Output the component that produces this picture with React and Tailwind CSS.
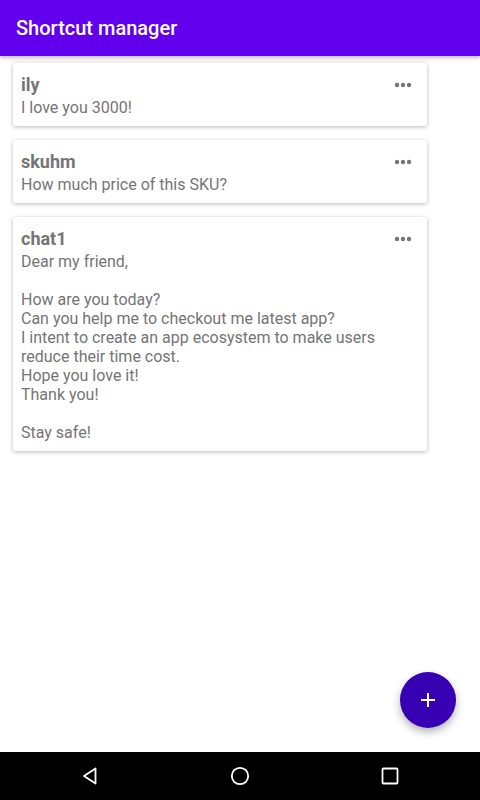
import React from "react";

function Dots() {
  return (
    <svg width="18" height="6" viewBox="0 0 18 6" className="block">
      <circle cx="3" cy="3" r="2.2" fill="#757575" />
      <circle cx="9" cy="3" r="2.2" fill="#757575" />
      <circle cx="15" cy="3" r="2.2" fill="#757575" />
    </svg>
  );
}

function Card({ title, lines }) {
  return (
    <div className="ml-[13px] w-[414px] bg-white rounded-[3px] shadow-[0_1px_4px_rgba(0,0,0,0.28)] pl-2 pr-4 pt-2 pb-[9px] relative">
      <div className="absolute right-[15px] top-[19px]">
        <Dots />
      </div>
      <div className="text-[18px] leading-[27px] font-bold text-[#757575]">{title}</div>
      <div className="text-[16px] leading-[19px] text-[#757575]">
        {lines.map((l, i) => (
          <div key={i} className="h-[19px] whitespace-pre">{l}</div>
        ))}
      </div>
    </div>
  );
}

export default function App() {
  return (
    <div className="w-[480px] h-[800px] bg-white flex flex-col relative overflow-hidden" style={{ fontFamily: "Roboto, 'Noto Sans', sans-serif" }}>
      <div className="h-[56px] bg-[#6200EE] flex items-center px-4 shadow-[0_2px_4px_rgba(0,0,0,0.25)] z-10">
        <span className="text-white text-[20px] font-medium">Shortcut manager</span>
      </div>
      <div className="flex-1 flex flex-col gap-[14px] pt-[7px]">
        <Card title="ily" lines={["I love you 3000!"]} />
        <Card title="skuhm" lines={["How much price of this SKU?"]} />
        <Card
          title="chat1"
          lines={[
            "Dear my friend,",
            "",
            "How are you today?",
            "Can you help me to checkout me latest app?",
            "I intent to create an app ecosystem to make users",
            "reduce their time cost.",
            "Hope you love it!",
            "Thank you!",
            "",
            "Stay safe!",
          ]}
        />
      </div>
      <div className="absolute left-[400px] top-[672px] w-[56px] h-[56px] rounded-full bg-[#3700B3] flex items-center justify-center shadow-[0_4px_8px_rgba(0,0,0,0.3)]">
        <svg width="16" height="16" viewBox="0 0 16 16">
          <path d="M8 1v14M1 8h14" stroke="white" strokeWidth="2" />
        </svg>
      </div>
      <div className="h-[48px] bg-black flex items-center justify-center gap-[130px]">
        <svg width="20" height="20" viewBox="0 0 20 20">
          <path d="M15.5 2.5 L4 10 L15.5 17.5 Z" fill="none" stroke="white" strokeWidth="1.8" strokeLinejoin="round" />
        </svg>
        <svg width="20" height="20" viewBox="0 0 20 20">
          <circle cx="10" cy="10" r="8.2" fill="none" stroke="white" strokeWidth="1.8" />
        </svg>
        <svg width="20" height="20" viewBox="0 0 20 20">
          <rect x="2.5" y="2.5" width="15" height="15" rx="1" fill="none" stroke="white" strokeWidth="1.8" />
        </svg>
      </div>
    </div>
  );
}
